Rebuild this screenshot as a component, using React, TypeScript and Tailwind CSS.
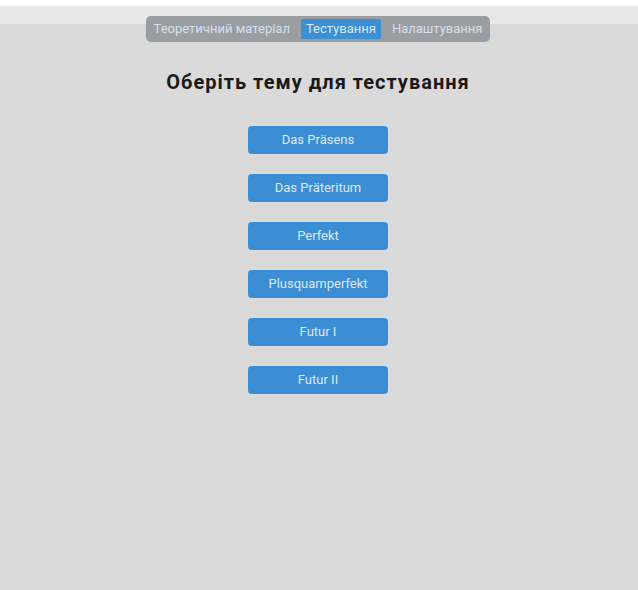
const topics = ["Das Präsens", "Das Präteritum", "Perfekt", "Plusquamperfekt", "Futur I", "Futur II"];

const tabs = ["Теоретичний матеріал", "Тестування", "Налаштування"];

export default function App() {
  return (
    <div className="min-h-[590px] bg-white pt-[6px] font-['Roboto',sans-serif]">
      <div className="min-h-[584px] bg-[linear-gradient(to_bottom,#e8e8e8_18px,#dadada_18px)] flex flex-col items-center pr-[2px]">
        <nav className="mt-[10px] flex items-center gap-[6px] rounded-[5px] bg-[#9a9da2] px-[3px] py-[3px]">
          {tabs.map((tab) => (
            <span
              key={tab}
              className={
                tab === "Тестування"
                  ? "rounded-[2px] bg-[#3b8fd4] px-[5px] text-[13px] leading-[20px] text-[#dde8f6]"
                  : "px-[5px] text-[13px] leading-[20px] text-[#d6e0ee]"
              }
            >
              {tab}
            </span>
          ))}
        </nav>

        <h1 className="mt-[26px] text-[20px] font-bold leading-[28px] tracking-[1px] text-[#1a1a1a]">
          Оберіть тему для тестування
        </h1>

        <div className="mt-[30px] flex flex-col gap-[20px]">
          {topics.map((topic) => (
            <button
              key={topic}
              className="h-[28px] w-[140px] rounded-[4px] bg-[#3b8ed3] text-[13px] text-[#dce8f6]"
            >
              {topic}
            </button>
          ))}
        </div>
      </div>
    </div>
  );
}
